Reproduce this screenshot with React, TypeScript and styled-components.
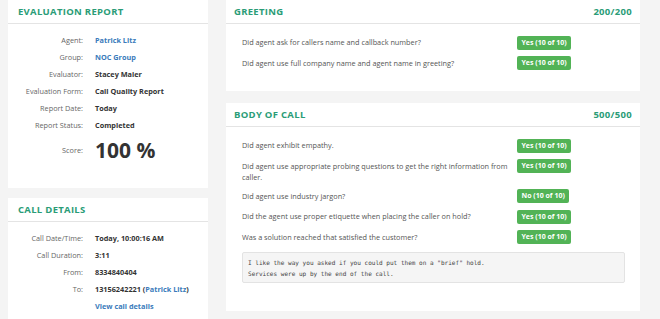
import React from 'react';
import styled, { createGlobalStyle } from 'styled-components';

const Global = createGlobalStyle`
  html, body { margin: 0; padding: 0; background: #f4f4f4; }
  body { font-family: "Open Sans", "Liberation Sans", sans-serif; color: #333; }
  * { box-sizing: border-box; }
`;

const Page = styled.div`
  display: flex;
  align-items: flex-start;
  gap: 18px;
  padding-left: 8px;
  width: 660px;
  height: 319px;
  overflow: hidden;
`;

const LeftCol = styled.div`
  width: 200px;
  flex-shrink: 0;
  display: flex;
  flex-direction: column;
  gap: 10px;
`;

const RightCol = styled.div`
  width: 414px;
  flex-shrink: 0;
  display: flex;
  flex-direction: column;
  gap: 12px;
`;

const Card = styled.section<{ $pb?: number }>`
  background: #fff;
  padding-bottom: ${p => p.$pb ?? 0}px;
`;

const CardHeader = styled.header<{ $pad: number }>`
  height: 24px;
  border-bottom: 1px solid #e4e4e4;
  display: flex;
  align-items: center;
  justify-content: space-between;
  padding: 0 ${p => p.$pad}px;
  font-weight: 700;
  font-size: 9.5px;
  letter-spacing: 0.3px;
  color: #2a9c77;
  text-transform: uppercase;
`;

const InfoGrid = styled.dl`
  margin: 0;
  padding-top: 8px;
  display: grid;
  grid-template-columns: 75px 1fr;
  column-gap: 12px;
  font-size: 7.3px;
  line-height: 17px;
`;

const Label = styled.dt<{ $tall?: boolean }>`
  margin: 0;
  text-align: right;
  color: #666;
  line-height: ${p => (p.$tall ? '33px' : '17px')};
`;

const Value = styled.dd<{ $big?: boolean }>`
  margin: 0;
  font-weight: 700;
  color: #333;
  font-size: ${p => (p.$big ? '21px' : '7.3px')};
  line-height: ${p => (p.$big ? '33px' : '17px')};
  white-space: nowrap;
`;

const Link = styled.a`
  color: #3a7bbb;
  font-weight: 700;
  text-decoration: none;
`;

const Questions = styled.div`
  padding: 9px 15px 0 16px;
`;

const QRow = styled.div`
  display: grid;
  grid-template-columns: 270px auto;
  column-gap: 5px;
  align-items: start;
  padding: 4px 0;
`;

const QText = styled.div`
  font-size: 7.3px;
  line-height: 11px;
  color: #555;
`;

const Badge = styled.span`
  justify-self: start;
  margin-top: -1.5px;
  height: 14px;
  padding: 0 4.5px;
  border-radius: 2px;
  background: #52b356;
  color: #fff;
  font-size: 7px;
  font-weight: 700;
  line-height: 14px;
  white-space: nowrap;
`;

const Comment = styled.pre`
  margin: 4px 0 0 0;
  padding: 5px;
  height: 31px;
  background: #f5f5f5;
  border: 1px solid #e3e3e3;
  border-radius: 2px;
  font-family: "DejaVu Sans Mono", "Liberation Mono", monospace;
  font-size: 6.05px;
  line-height: 10.5px;
  color: #444;
  white-space: pre-wrap;
`;

const Stub = styled.section`
  background: #fff;
  height: 20px;
`;

type Q = { q: string; a: string };

const greeting: Q[] = [
  { q: 'Did agent ask for callers name and callback number?', a: 'Yes (10 of 10)' },
  { q: 'Did agent use full company name and agent name in greeting?', a: 'Yes (10 of 10)' },
];

const body: Q[] = [
  { q: 'Did agent exhibit empathy.', a: 'Yes (10 of 10)' },
  { q: 'Did agent use appropriate probing questions to get the right information from caller.', a: 'Yes (10 of 10)' },
  { q: 'Did agent use industry jargon?', a: 'No (10 of 10)' },
  { q: 'Did the agent use proper etiquette when placing the caller on hold?', a: 'Yes (10 of 10)' },
  { q: 'Was a solution reached that satisfied the customer?', a: 'Yes (10 of 10)' },
];

const QuestionList = ({ items }: { items: Q[] }) => (
  <>
    {items.map((it, i) => (
      <QRow key={i}>
        <QText>{it.q}</QText>
        <Badge>{it.a}</Badge>
      </QRow>
    ))}
  </>
);

export default function App() {
  return (
    <>
      <Global />
      <Page>
        <LeftCol>
          <Card $pb={21}>
            <CardHeader $pad={10}>Evaluation Report</CardHeader>
            <InfoGrid>
              <Label>Agent:</Label>
              <Value><Link>Patrick Litz</Link></Value>
              <Label>Group:</Label>
              <Value><Link>NOC Group</Link></Value>
              <Label>Evaluator:</Label>
              <Value>Stacey Maier</Value>
              <Label>Evaluation Form:</Label>
              <Value>Call Quality Report</Value>
              <Label>Report Date:</Label>
              <Value>Today</Value>
              <Label>Report Status:</Label>
              <Value>Completed</Value>
              <Label $tall>Score:</Label>
              <Value $big>100 %</Value>
            </InfoGrid>
          </Card>
          <Card $pb={20}>
            <CardHeader $pad={10}>Call Details</CardHeader>
            <InfoGrid>
              <Label>Call Date/Time:</Label>
              <Value>Today, 10:00:16 AM</Value>
              <Label>Call Duration:</Label>
              <Value>3:11</Value>
              <Label>From:</Label>
              <Value>8334840404</Value>
              <Label>To:</Label>
              <Value>13156242221 (<Link>Patrick Litz</Link>)</Value>
              <Label></Label>
              <Value><Link>View call details</Link></Value>
            </InfoGrid>
          </Card>
        </LeftCol>
        <RightCol>
          <Card $pb={17}>
            <CardHeader $pad={8}>
              <span>Greeting</span>
              <span>200/200</span>
            </CardHeader>
            <Questions>
              <QuestionList items={greeting} />
            </Questions>
          </Card>
          <Card $pb={28}>
            <CardHeader $pad={8}>
              <span>Body of Call</span>
              <span>500/500</span>
            </CardHeader>
            <Questions>
              <QuestionList items={body} />
              <Comment>{'I like the way you asked if you could put them on a "brief" hold.\nServices were up by the end of the call.'}</Comment>
            </Questions>
          </Card>
          <Stub />
        </RightCol>
      </Page>
    </>
  );
}
